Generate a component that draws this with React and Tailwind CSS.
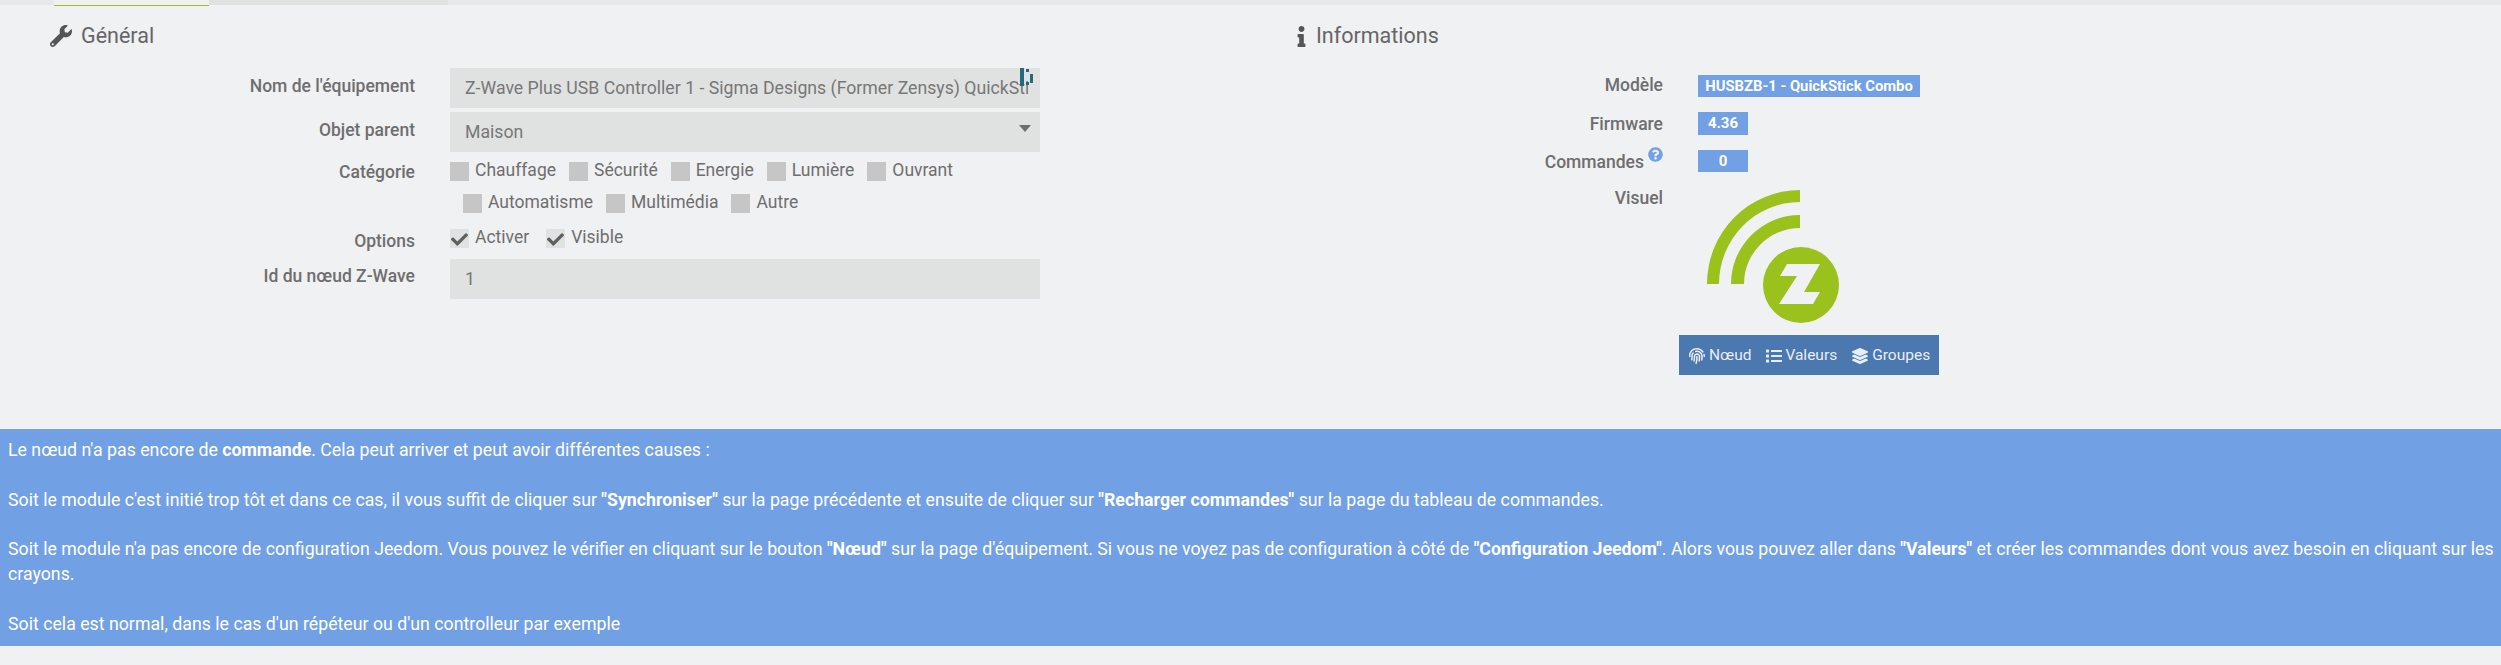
import React from "react";
import { FaWrench, FaInfo, FaFingerprint, FaList, FaLayerGroup, FaCheck, FaQuestionCircle } from "react-icons/fa";

const categoriesA = ["Chauffage", "Sécurité", "Energie", "Lumière", "Ouvrant"];
const categoriesB = ["Automatisme", "Multimédia", "Autre"];

const Label = ({ children, className = "" }) => (
  <div className={`w-[450px] shrink-0 pr-[35px] text-right font-medium text-[#6e6e6e] ${className}`}>{children}</div>
);

const Box = ({ label, checked }) => (
  <div className="flex h-[19px] items-center">
    <span className={`relative mr-[6px] h-[19px] w-[19px] ${checked ? "bg-[#e0e2e1]" : "bg-[#c6c6c6]"}`}>
      {checked && <FaCheck className="absolute left-[1px] top-[2px] text-[17px] text-[#5f5f5f]" />}
    </span>
    <span className="relative top-[-1px]">{label}</span>
  </div>
);

const FieldBox = ({ children }) => (
  <div className="relative flex h-[40px] w-[590px] items-center bg-[#e0e2e1] pl-[15px] pr-[12px] text-[17.7px] text-[#777777]">
    {children}
  </div>
);

const ZWaveLogo = () => (
  <svg width="160" height="134" viewBox="0 0 160 134" className="block">
    <path d="M9 94 A93 94 0 0 1 102 0 V12 A81 82 0 0 0 21 94 Z" fill="#9bc11c" />
    <path d="M33 94 A69 69 0 0 1 102 25 V38 A56 56 0 0 0 46 94 Z" fill="#9bc11c" />
    <circle cx="103" cy="95" r="38" fill="#9bc11c" />
    <path d="M89 74 H122 L106 102 H122 L115 114 H81 L99 86 H82 Z" fill="#f0f1f3" />
  </svg>
);

export default function App() {
  return (
    <div className="min-h-[665px] bg-[#f0f1f3] font-['Roboto',sans-serif] text-[17.5px] text-[#6e6e6e]">
      <div className="flex h-[5px] bg-[#e7e8ea]">
        <div className="ml-[54px] h-[6px] w-[155px] border-b border-[#9bc11c] bg-[#f0f1f3]" />
        <div className="h-[5px] w-[239px] bg-[#e0e2e1]" />
      </div>

      <div className="flex h-[424px]">
        <div className="w-[1250px] shrink-0 pt-[13px]">
          <div className="flex h-[36px] items-center pl-[50px] text-[21.5px] text-[#666666]">
            <FaWrench className="mr-[9px] text-[22px] text-[#555555]" />
            Général
          </div>
          <div className="mt-[14px] flex flex-col">
            <div className="flex h-[44px]">
              <Label className="pt-[5px]">Nom de l'équipement</Label>
              <FieldBox>
                <span className="overflow-hidden whitespace-nowrap">Z-Wave Plus USB Controller 1 - Sigma Designs (Former Zensys) QuickStick Combo</span>
                <svg width="13" height="19" viewBox="0 0 13 19" className="absolute left-[570px] top-0" fill="#23697e">
                  <rect x="0" y="0" width="4" height="18" />
                  <rect x="6" y="1" width="3" height="3" />
                  <rect x="6" y="14" width="3" height="3" />
                  <rect x="10" y="6" width="3" height="9" />
                </svg>
              </FieldBox>
            </div>
            <div className="flex h-[44px]">
              <Label className="pt-[5px]">Objet parent</Label>
              <FieldBox>
                Maison
                <span className="absolute left-[569px] top-[13px] h-0 w-0 border-x-[6px] border-t-[7px] border-x-transparent border-t-[#6e6e6e]" />
              </FieldBox>
            </div>
            <div className="flex h-[32px]">
              <Label className="pt-[3px]">Catégorie</Label>
              <div className="flex items-start gap-[13px] pt-[6px]">
                {categoriesA.map((c) => <Box key={c} label={c} />)}
              </div>
            </div>
            <div className="flex h-[35px]">
              <Label />
              <div className="flex items-start gap-[13px] pl-[13px] pt-[6px]">
                {categoriesB.map((c) => <Box key={c} label={c} />)}
              </div>
            </div>
            <div className="mt-[6px] flex h-[30px]">
              <Label className="mt-[-1px]">Options</Label>
              <div className="flex items-start gap-[17px]">
                <Box label="Activer" checked />
                <Box label="Visible" checked />
              </div>
            </div>
            <div className="flex h-[40px]">
              <Label className="pt-[4px]">Id du nœud Z-Wave</Label>
              <FieldBox>1</FieldBox>
            </div>
          </div>
        </div>

        <div className="flex-1 pt-[13px]">
          <div className="flex h-[36px] items-center pl-[41px] text-[21.5px] text-[#666666]">
            <FaInfo className="mr-[4px] text-[21px] text-[#555555]" />
            Informations
          </div>
          <div className="mt-[21px] flex">
            <div className="mt-[-3px] w-[413px] shrink-0 text-right font-medium text-[#6e6e6e]">
              <div className="h-[37px]">Modèle</div>
              <div className="h-[38px] pt-[2px]">Firmware</div>
              <div className="relative h-[38px]">
                Commandes
                <FaQuestionCircle className="ml-[4px] inline-block align-[6px] text-[15px] text-[#72a0e5]" />
              </div>
              <div>Visuel</div>
            </div>
            <div className="ml-[35px] w-[300px]">
              <div className="h-[37px]">
                <span className="flex h-[22px] w-[222px] items-center justify-center bg-[#72a0e5] text-[14.8px] font-bold text-white">HUSBZB-1 - QuickStick Combo</span>
              </div>
              <div className="h-[38px]">
                <span className="flex h-[23px] w-[50px] items-center justify-center bg-[#72a0e5] text-[15px] font-bold text-white">4.36</span>
              </div>
              <div className="h-[40px]">
                <span className="flex h-[22px] w-[50px] items-center justify-center bg-[#72a0e5] text-[15px] font-bold text-white">0</span>
              </div>
              <ZWaveLogo />
              <div className="ml-[-19px] mt-[11px] flex h-[40px] w-[260px] items-center gap-[15px] bg-[#4c78b0] pl-[10px] pt-[1px] text-[15.5px] text-[#e8eef6]">
                <span className="flex items-center gap-[4px]"><FaFingerprint className="text-[16px]" />Nœud</span>
                <span className="flex items-center gap-[3px]"><FaList className="text-[16px]" />Valeurs</span>
                <span className="flex items-center gap-[4px]"><FaLayerGroup className="text-[16px]" />Groupes</span>
              </div>
            </div>
          </div>
        </div>
      </div>

      <div className="h-[217px] bg-[#72a0e5] pl-[8px] pt-[9px] text-[17.74px] leading-[24.8px] text-white">
        <p>Le nœud n'a pas encore de <b>commande</b>. Cela peut arriver et peut avoir différentes causes :</p>
        <br />
        <p>Soit le module c'est initié trop tôt et dans ce cas, il vous suffit de cliquer sur <b>"Synchroniser"</b> sur la page précédente et ensuite de cliquer sur <b>"Recharger commandes"</b> sur la page du tableau de commandes.</p>
        <br />
        <p>Soit le module n'a pas encore de configuration Jeedom. Vous pouvez le vérifier en cliquant sur le bouton <b>"Nœud"</b> sur la page d'équipement. Si vous ne voyez pas de configuration à côté de <b>"Configuration Jeedom"</b>. Alors vous pouvez aller dans <b>"Valeurs"</b> et créer les commandes dont vous avez besoin en cliquant sur les crayons.</p>
        <br />
        <p>Soit cela est normal, dans le cas d'un répéteur ou d'un controlleur par exemple</p>
      </div>
    </div>
  );
}
